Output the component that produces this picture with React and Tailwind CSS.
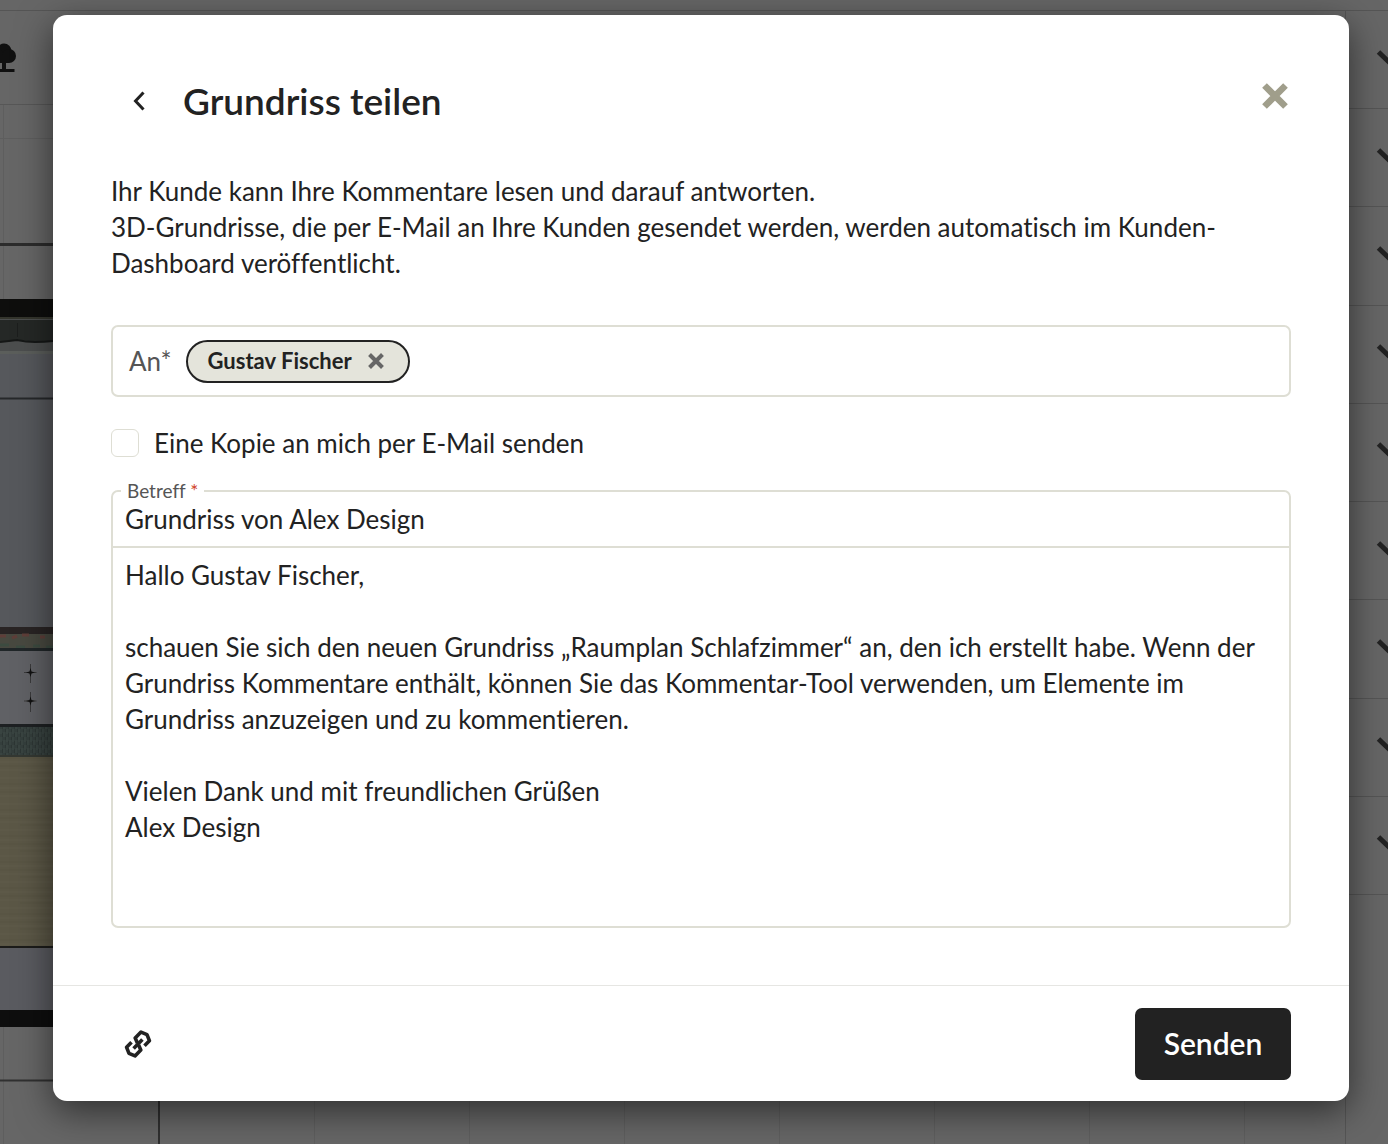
import { useState } from "react";

const rows = ["Boden", "Wände", "Türen", "Fenster", "Möbel", "Küche", "Bad", "Licht", "Deko"];

const message = `Hallo Gustav Fischer,

schauen Sie sich den neuen Grundriss „Raumplan Schlafzimmer“ an, den ich erstellt habe. Wenn der Grundriss Kommentare enthält, können Sie das Kommentar-Tool verwenden, um Elemente im Grundriss anzuzeigen und zu kommentieren.

Vielen Dank und mit freundlichen Grüßen
Alex Design`;

function Cross({ className }) {
  return (
    <svg viewBox="0 0 26 26" className={className} fill="none" stroke="currentColor" strokeWidth="6.6" aria-hidden="true">
      <path d="M2.5 2.5 23.5 23.5M23.5 2.5 2.5 23.5" />
    </svg>
  );
}

function ChainIcon() {
  return (
    <svg viewBox="0 0 28 28" className="size-7" fill="none" stroke="currentColor" strokeWidth="3.6" strokeLinejoin="round" aria-hidden="true">
      <path d="M7.500 12.300 2.600 17.300 5 23.400 11 25.900 16.800 20 14.600 15" />
      <path d="M20.500 15.700 25.400 10.700 23 4.600 17 2.100 11.200 8 13.400 13" />
      <path d="M9.600 18.400 18.400 9.600" />
    </svg>
  );
}

function TreeIcon() {
  return (
    <svg viewBox="0 0 32 32" className="size-8" fill="#101010" aria-hidden="true">
      <circle cx="20" cy="9" r="7.5" />
      <circle cx="13" cy="14" r="7" />
      <circle cx="25" cy="14" r="7" />
      <path d="M13 14h12v7H13zM18 20h4v7h-4z" />
      <path d="M8 27h22.500v3H8z" />
    </svg>
  );
}

function FloorPlan() {
  return (
    <svg className="block h-full w-full" aria-hidden="true">
      <defs>
        <pattern id="carpet" width="6" height="8" patternUnits="userSpaceOnUse">
          <rect width="6" height="8" fill="#343e3c" />
          <path d="M1 0v5M4 3v5" stroke="#3d4945" />
          <path d="M2.500 4v4M5.500 0v3" stroke="#2d3634" />
        </pattern>
        <pattern id="wood" width="120" height="26" patternUnits="userSpaceOnUse">
          <rect width="120" height="26" fill="#5b5746" />
          <path d="M0 3h120M0 11h50M20 18h100" stroke="#575342" />
          <path d="M0 7h120M0 15h90M0 23h80" stroke="#5f5b4a" />
        </pattern>
      </defs>
      <path d="M0 33.500h160M3.500 0V194M3.500 922v118M314.500 900v140M469.500 900v140M624.500 900v140M779.500 900v140M934.500 900v140M1089.500 900v140M1244.500 900v140" stroke="#5e5e5e" />
      <path d="M0 139.500h160" stroke="#2c2c2c" strokeWidth="3" />
      <rect y="194" width="160" height="18" fill="#0e0e0d" />
      <rect y="212" width="160" height="3" fill="#34352d" />
      <rect y="214" width="160" height="34" fill="#4c4e4e" />
      <path d="M0 215H70V236H53Q44 237 35 236.500T17 234.500Q8 236 0 237Z" fill="#252826" />
      <path d="M0 237Q9 236 17 235 26 237 35 237T53 236H70" fill="none" stroke="#151716" strokeWidth="2" />
      <path d="M17.500 218v14" stroke="#1c1e1d" />
      <rect y="246" width="160" height="3" fill="#5b5e5b" />
      <rect y="249" width="160" height="274" fill="#56585c" />
      <path d="M0 293.500h160" stroke="#26282a" strokeWidth="2" />
      <rect y="522" width="160" height="7" fill="#292424" />
      <rect y="529" width="160" height="16" fill="#484940" />
      <path d="M0 531h6M12 533l5-2M22 530h7M40 532h5" stroke="#5e3e39" strokeWidth="3" fill="none" />
      <path d="M0 540h9M16 542h9M33 541h7M46 542h8" stroke="#3c4b40" strokeWidth="3" fill="none" />
      <rect y="543" width="160" height="3" fill="#202628" />
      <rect y="546" width="160" height="74" fill="#606165" />
      <path d="M30.500 559v19M24 567.500h12.500M30.500 587v20M24 596h12.500" stroke="#3a3a3b" />
      <path d="M30.500 563 31.500 566.500 35 567.500 31.500 568.500 30.500 572 29.500 568.500 26 567.500 29.500 566.500ZM30.500 591.500 31.500 595 35 596 31.500 597 30.500 600.500 29.500 597 26 596 29.500 595Z" fill="#111" />
      <rect y="619" width="160" height="3" fill="#1d2022" />
      <rect y="622" width="160" height="28" fill="url(#carpet)" />
      <rect y="650" width="160" height="2" fill="#343832" />
      <rect y="652" width="160" height="190" fill="url(#wood)" />
      <rect y="841" width="160" height="2" fill="#1c1c1a" />
      <rect y="843" width="160" height="62" fill="#5a5b60" />
      <rect y="905" width="160" height="17" fill="#0e0e0e" />
      <path d="M0 975.500h159V1040" fill="none" stroke="#303030" strokeWidth="2" />
    </svg>
  );
}

function Backdrop() {
  return (
    <div className="absolute inset-0 flex flex-col bg-[#666]">
      <div className="h-[11px] shrink-0 border-b border-[#555]" />
      <div className="flex min-h-0 flex-1">
        <div className="flex min-w-0 flex-1 flex-col">
          <div className="-ml-4 flex h-[94px] shrink-0 items-center border-b border-[#575757]">
            <TreeIcon />
          </div>
          <div className="min-h-0 flex-1">
            <FloorPlan />
          </div>
        </div>
        <div className="w-[43px] shrink-0 overflow-hidden border-l border-[#555]">
          <div className="flex h-[884px] flex-col">
            {rows.map((name) => (
              <button
                key={name}
                type="button"
                tabIndex={-1}
                aria-label={name}
                className="flex w-full flex-1 items-center border-b border-[#555] pb-1 pl-[30px] text-[#222]"
              >
                <svg viewBox="0 0 28 18" className="h-[18px] w-7 shrink-0" fill="none" stroke="currentColor" strokeWidth="5" aria-hidden="true">
                  <path d="M2.500 3 14 14 25.500 3" />
                </svg>
              </button>
            ))}
          </div>
        </div>
      </div>
    </div>
  );
}

export default function App() {
  const [recipient, setRecipient] = useState("Gustav Fischer");

  return (
    <div className="relative min-h-screen overflow-hidden pt-[15px] pr-[39px] pb-[43px] pl-[53px] font-['Lato',sans-serif] text-[26px] leading-9 text-[#222] [font-variant-ligatures:none]">
      <Backdrop />
      <form
        role="dialog"
        aria-labelledby="share-title"
        onSubmit={(e) => e.preventDefault()}
        className="relative rounded-[14px] bg-white shadow-[0_10px_36px_rgba(0,0,0,0.55)]"
      >
        <div className="px-[58px] pt-[62px] pb-[57px]">
          <header className="flex h-12 items-center">
            <button type="button" aria-label="Zurück" className="flex h-12 w-14 items-center justify-center">
              <svg viewBox="0 0 12 20" className="h-5 w-3" fill="none" stroke="currentColor" strokeWidth="3" aria-hidden="true">
                <path d="M10.500 1.500 2.500 10 10.500 18.500" />
              </svg>
            </button>
            <h1 id="share-title" className="ml-4 text-[37px] font-semibold">
              Grundriss teilen
            </h1>
            <button type="button" aria-label="Schließen" className="mr-[3px] mb-[10px] ml-auto text-[#a09e8b]">
              <Cross className="size-[26px]" />
            </button>
          </header>

          <p className="mt-12">
            Ihr Kunde kann Ihre Kommentare lesen und darauf antworten.
            <br />
            3D-Grundrisse, die per E-Mail an Ihre Kunden gesendet werden, werden automatisch im Kunden-Dashboard veröffentlicht.
          </p>

          <div className="mt-11 flex h-[72px] items-center rounded-[7px] border-2 border-[#deded4] px-4">
            <label htmlFor="recipient" className="text-[#555]">
              An*
            </label>
            {recipient && (
              <span className="ml-[14px] flex h-[43px] items-center rounded-full border-2 border-[#222] bg-[#e4e4db] px-5 text-[22px] font-bold">
                {recipient}
                <button
                  type="button"
                  aria-label={`${recipient} entfernen`}
                  onClick={() => setRecipient("")}
                  className="mr-1 ml-4 text-[#666]"
                >
                  <Cross className="size-4" />
                </button>
              </span>
            )}
            <input id="recipient" type="text" className="ml-3 min-w-0 flex-1 outline-none" />
          </div>

          <label className="mt-7 flex items-center gap-[15px]">
            <input type="checkbox" className="size-7 appearance-none rounded-[6px] border border-[#deded4] bg-white checked:bg-[#222]" />
            Eine Kopie an mich per E-Mail senden
          </label>

          <div className="relative mt-[29px] rounded-[7px] border-2 border-[#deded4]">
            <label htmlFor="subject" className="absolute -top-3 left-2 bg-white px-[6px] text-[19px] leading-[22px] text-[#555]">
              Betreff <span className="text-[#d0401f]">*</span>
            </label>
            <input
              id="subject"
              type="text"
              required
              defaultValue="Grundriss von Alex Design"
              className="block h-14 w-full border-b-2 border-[#deded4] px-3 outline-none"
            />
            <textarea
              aria-label="Nachricht"
              defaultValue={message}
              className="block h-[378px] w-full resize-none px-3 pt-[9px] outline-none"
            />
          </div>
        </div>

        <footer className="flex items-center justify-between border-t border-[#e6e6e3] px-[58px] pt-[22px] pb-[21px]">
          <button type="button" aria-label="Link kopieren" className="ml-[13px]">
            <ChainIcon />
          </button>
          <button type="submit" className="h-[72px] w-[156px] rounded-[7px] bg-[#222] pb-[2px] text-[30px] font-semibold text-white">
            Senden
          </button>
        </footer>
      </form>
    </div>
  );
}
